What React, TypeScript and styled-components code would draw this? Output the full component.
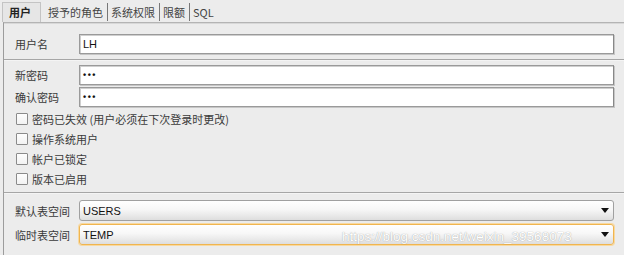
import React from "react";
import styled, { createGlobalStyle } from "styled-components";

const Global = createGlobalStyle`
  html, body { margin: 0; padding: 0; background: #ececec; }
  body { font-family: "Noto Sans CJK SC", "DejaVu Sans", sans-serif; }
`;

const Root = styled.div`
  position: relative;
  width: 624px;
  height: 255px;
  overflow: hidden;
  background: #ececec;
  display: flex;
  flex-direction: column;
  font-size: 11px;
  color: #333;
`;

const TabBar = styled.div`
  height: 22px;
  display: flex;
  align-items: flex-end;
  padding-left: 2px;
  box-sizing: border-box;
`;

const Tab = styled.div<{ $active?: boolean; $sep?: boolean }>`
  height: ${(p) => (p.$active ? "20px" : "18px")};
  display: flex;
  align-items: center;
  box-sizing: border-box;
  padding: ${(p) => (p.$active ? "0 9px 0 6px" : "0 4px 0 3px")};
  margin-bottom: ${(p) => (p.$active ? "0" : "1px")};
  margin-right: ${(p) => (p.$active ? "4px" : "0")};
  font-size: 11px;
  font-weight: ${(p) => (p.$active ? 700 : 400)};
  color: ${(p) => (p.$active ? "#222" : "#444")};
  background: ${(p) => (p.$active ? "#e6e6e6" : "transparent")};
  border: ${(p) => (p.$active ? "1px solid #c4c4c4" : "none")};
  border-bottom: none;
  border-left: ${(p) =>
    p.$active ? "1px solid #c4c4c4" : p.$sep ? "1px solid #777" : "none"};
  line-height: 1;
`;

const Panel = styled.div`
  flex: 1;
  margin-left: 3px;
  border-top: 1px solid #b4b4b4;
  border-left: 1px solid #9c9c9c;
  box-shadow: inset 0 1px 0 #d8d8d8;
  display: flex;
  flex-direction: column;
`;

const Section = styled.div<{ $pt: number; $pb: number; $gap: number }>`
  display: flex;
  flex-direction: column;
  gap: ${(p) => p.$gap}px;
  padding: ${(p) => p.$pt}px 10px ${(p) => p.$pb}px 11px;
`;

const Divider = styled.div`
  height: 1px;
  background: #a6a6a6;
  box-shadow: 0 1px 0 #f4f4f4;
`;

const FieldRow = styled.div<{ $h?: number }>`
  display: grid;
  grid-template-columns: 64px 1fr;
  align-items: center;
  height: ${(p) => p.$h ?? 20}px;
`;

const Label = styled.span`
  color: #3a3a3a;
  font-size: 11px;
`;

const TextBox = styled.div`
  height: 20px;
  box-sizing: border-box;
  background: #fff;
  border: 1px solid #9a9a9a;
  border-right-color: #888;
  box-shadow: inset 1px 1px 0 #cfcfcf, 1px 1px 0 #c6c6c6;
  display: flex;
  align-items: center;
  padding-left: 3px;
  font-family: "Liberation Sans", "DejaVu Sans", sans-serif;
  font-size: 11px;
  color: #111;
`;

const Dots = styled.span`
  font-size: 9px;
  letter-spacing: 1.5px;
  font-weight: 700;
  line-height: 1;
`;

const CheckList = styled.div`
  display: flex;
  flex-direction: column;
`;

const CheckRow = styled.div`
  height: 20px;
  display: flex;
  align-items: center;
  gap: 4px;
  padding-left: 1px;
  color: #3a3a3a;
`;

const Box = styled.span`
  width: 12px;
  height: 12px;
  box-sizing: border-box;
  border: 1px solid #8a8a8a;
  background: linear-gradient(#fdfdfd, #f2f2f2);
  border-radius: 1px;
`;

const Combo = styled.div<{ $focus?: boolean }>`
  height: 100%;
  box-sizing: border-box;
  border: 1px solid ${(p) => (p.$focus ? "#f0b550" : "#a0a0a0")};
  box-shadow: ${(p) => (p.$focus ? "0 0 0 1px #f8d9a0" : "none")};
  border-radius: 3px;
  background: linear-gradient(#ffffff 0%, #f7f7f7 45%, #dedede 100%);
  display: flex;
  align-items: center;
  justify-content: space-between;
  padding: 0 4px 0 3px;
  font-family: "Liberation Sans", "DejaVu Sans", sans-serif;
  font-size: 11px;
  color: #111;
`;

const Arrow = styled.svg`
  width: 8px;
  height: 5px;
  flex: none;
`;

const Watermark = styled.div`
  position: absolute;
  left: 342px;
  top: 229px;
  font-family: "Liberation Sans", "DejaVu Sans", sans-serif;
  font-size: 13.5px;
  color: #ffffff;
  text-shadow: 0 0 1px rgba(60, 60, 60, 0.55);
  white-space: nowrap;
  pointer-events: none;
`;

const DownArrow = () => (
  <Arrow viewBox="0 0 8 5">
    <path d="M0 0 H8 L4 5 Z" fill="#111" />
  </Arrow>
);

export default function App() {
  return (
    <Root>
      <Global />
      <TabBar>
        <Tab $active>用户</Tab>
        <Tab>授予的角色</Tab>
        <Tab $sep>系统权限</Tab>
        <Tab $sep>限额</Tab>
        <Tab $sep>SQL</Tab>
      </TabBar>
      <Panel>
        <Section $pt={11} $pb={5} $gap={0}>
          <FieldRow>
            <Label>用户名</Label>
            <TextBox>LH</TextBox>
          </FieldRow>
        </Section>
        <Divider />
        <Section $pt={5} $pb={3} $gap={2}>
          <FieldRow>
            <Label>新密码</Label>
            <TextBox>
              <Dots>•••</Dots>
            </TextBox>
          </FieldRow>
          <FieldRow>
            <Label>确认密码</Label>
            <TextBox>
              <Dots>•••</Dots>
            </TextBox>
          </FieldRow>
          <CheckList>
            <CheckRow>
              <Box />
              <span>密码已失效 (用户必须在下次登录时更改)</span>
            </CheckRow>
            <CheckRow>
              <Box />
              <span>操作系统用户</span>
            </CheckRow>
            <CheckRow>
              <Box />
              <span>帐户已锁定</span>
            </CheckRow>
            <CheckRow>
              <Box />
              <span>版本已启用</span>
            </CheckRow>
          </CheckList>
        </Section>
        <Divider />
        <Section $pt={7} $pb={0} $gap={3}>
          <FieldRow $h={21}>
            <Label>默认表空间</Label>
            <Combo>
              <span>USERS</span>
              <DownArrow />
            </Combo>
          </FieldRow>
          <FieldRow $h={21}>
            <Label>临时表空间</Label>
            <Combo $focus>
              <span>TEMP</span>
              <DownArrow />
            </Combo>
          </FieldRow>
        </Section>
      </Panel>
      <Watermark>https://blog.csdn.net/weixin_39568073</Watermark>
    </Root>
  );
}
